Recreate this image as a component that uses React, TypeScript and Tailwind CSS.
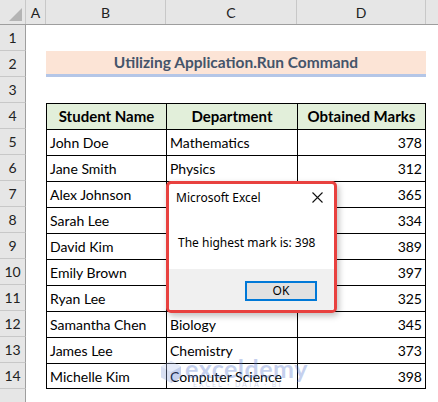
import React from 'react';

// department cells under the message box are hidden in the picture
const rows = [
  ['John Doe', 'Mathematics', '378'],
  ['Jane Smith', 'Physics', '312'],
  ['Alex Johnson', '', '365'],
  ['Sarah Lee', '', '334'],
  ['David Kim', '', '389'],
  ['Emily Brown', '', '397'],
  ['Ryan Lee', '', '325'],
  ['Samantha Chen', 'Biology', '345'],
  ['James Lee', 'Chemistry', '373'],
  ['Michelle Kim', 'Computer Science', '398'],
];

function RowHead({ n }: { n: number }) {
  return (
    <div className="w-[26px] shrink-0 h-full flex items-center justify-center bg-[#e6e6e6] border-r border-b border-r-[#9e9e9e] border-b-[#c8c8c8] text-[14px] text-[#222]">
      {n}
    </div>
  );
}

function Spacer() {
  return <div className="w-[20px] shrink-0" />;
}

export default function App() {
  return (
    <div
      className="relative w-[438px] h-[402px] bg-white overflow-hidden text-black"
      style={{ fontFamily: 'Lato, "Liberation Sans", sans-serif' }}
    >
      {/* column headers */}
      <div className="flex h-[25px] bg-[#e6e6e6] border-b border-[#9e9e9e] text-[14px] text-[#222]">
        <div className="relative w-[26px] shrink-0 border-r border-[#c8c8c8]">
          <svg className="absolute right-[3px] bottom-[3px]" width="13" height="13" viewBox="0 0 13 13">
            <path d="M13 0 L13 13 L0 13 Z" fill="#b4b4b4" />
          </svg>
        </div>
        <div className="w-[20px] shrink-0 flex items-center justify-center border-r border-[#c8c8c8]">A</div>
        <div className="w-[120px] shrink-0 flex items-center justify-center border-r border-[#c8c8c8]">B</div>
        <div className="w-[131px] shrink-0 flex items-center justify-center border-r border-[#c8c8c8]">C</div>
        <div className="w-[129px] shrink-0 flex items-center justify-center border-r border-[#c8c8c8]">D</div>
        <div className="flex-1" />
      </div>

      {/* row 1 */}
      <div className="flex h-[26px]">
        <RowHead n={1} />
      </div>

      {/* row 2 title */}
      <div className="flex h-[26px]">
        <RowHead n={2} />
        <Spacer />
        <div className="w-[380px] shrink-0 flex items-center justify-center bg-[#fce4d6] border-b-[3px] border-[#b4c6e7] text-[15.5px] font-bold text-[#44546a]">
          Utilizing Application.Run Command
        </div>
      </div>

      {/* row 3 */}
      <div className="flex h-[26px]">
        <RowHead n={3} />
      </div>

      {/* row 4 header */}
      <div className="flex h-[26px]">
        <RowHead n={4} />
        <Spacer />
        <div className="w-[120px] shrink-0 flex items-center justify-center bg-[#e2efda] border-l border-t border-black font-bold text-[15px]">
          Student Name
        </div>
        <div className="w-[131px] shrink-0 flex items-center justify-center bg-[#e2efda] border-l border-t border-black font-bold text-[15px]">
          Department
        </div>
        <div className="w-[129px] shrink-0 flex items-center justify-center bg-[#e2efda] border-l border-t border-r border-black font-bold text-[15px]">
          Obtained Marks
        </div>
      </div>

      {rows.map((r, i) => {
        const last = i === rows.length - 1;
        return (
          <div key={i} className="flex h-[26px]">
            <RowHead n={i + 5} />
            <Spacer />
            <div className={'w-[120px] shrink-0 flex items-center pl-[3px] border-l border-t border-black text-[14px] ' + (last ? 'border-b' : '')}>
              {r[0]}
            </div>
            <div className={'w-[131px] shrink-0 flex items-center pl-[3px] border-l border-t border-black text-[14px] ' + (last ? 'border-b' : '')}>
              {r[1]}
            </div>
            <div className={'w-[129px] shrink-0 flex items-center justify-end pr-[3px] border-l border-t border-r border-black text-[14px] ' + (last ? 'border-b' : '')}>
              {r[2]}
            </div>
          </div>
        );
      })}

      <div className="flex h-[20px]">
        <div className="w-[26px] shrink-0 h-full bg-[#e6e6e6] border-r border-[#9e9e9e]" />
      </div>

      {/* watermark */}
      <div className="absolute left-[160px] top-[356px] flex items-center gap-[3px] opacity-35 pointer-events-none">
        <svg width="22" height="24" viewBox="0 0 22 24">
          <path d="M11 1 L21 6.5 L21 17.5 L11 23 L1 17.5 L1 6.5 Z" fill="#8fa6dd" />
          <path d="M11 12 L21 6.5 L21 17.5 L11 23 Z" fill="#5b7bd0" />
          <path d="M11 12 L1 6.5 L11 1 L21 6.5 Z" fill="#b9c8ee" />
        </svg>
        <div className="flex flex-col leading-none">
          <span className="text-[25px] font-bold text-[#5b7bd0] tracking-[0.5px]">exceldemy</span>
          <span className="text-[7px] text-[#7f93c8] tracking-[2px] pl-[8px]">EXCEL · DATA · BI</span>
        </div>
      </div>

      {/* message box */}
      <div
        className="absolute left-[166px] top-[181px] w-[171px] h-[132px] border-[3px] border-[#e8413f] rounded-[5px] bg-white overflow-hidden shadow-[2px_3px_6px_rgba(0,0,0,0.25)] flex flex-col"
        style={{ fontFamily: '"Noto Sans", "Open Sans", sans-serif' }}
      >
        <div className="h-[85px] flex flex-col">
          <div className="flex items-center justify-between pl-[7px] pr-[11px] pt-[1px] h-[26px]">
            <span className="text-[12px] text-black">Microsoft Excel</span>
            <svg width="11" height="11" viewBox="0 0 11 11" stroke="#111" strokeWidth="1.1">
              <path d="M0.5 0.5 L10.5 10.5 M10.5 0.5 L0.5 10.5" />
            </svg>
          </div>
          <div className="pl-[9px] pt-[24px] text-[12px] text-black">The highest mark is: 398</div>
        </div>
        <div className="flex-1 bg-[#f0f0f0] flex justify-end items-start pt-[12px] pr-[17px]">
          <div className="w-[72px] h-[20px] border-2 border-[#0078d7] bg-[#e1e1e1] flex items-center justify-center text-[12px] text-black">
            OK
          </div>
        </div>
      </div>
    </div>
  );
}
